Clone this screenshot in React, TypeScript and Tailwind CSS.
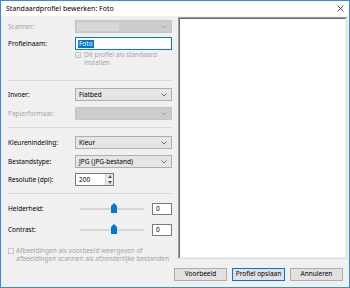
import { useState } from "react";

function Chevron({ color = "#606060" }: { color?: string }) {
  return (
    <svg width="6" height="4" viewBox="0 0 6 4" className="shrink-0">
      <path d="M0.5 0.5 L3 3 L5.5 0.5" fill="none" stroke={color} strokeWidth="0.9" />
    </svg>
  );
}

function Select({ value, disabled }: { value?: string; disabled?: boolean }) {
  return (
    <div
      className={
        disabled
          ? "ml-auto flex h-[13px] w-[97px] items-center justify-between border border-[#c4c4c4] bg-[#cccccc] pl-[1px] pr-[4px]"
          : "ml-auto flex h-[13px] w-[97px] items-center justify-between border border-[#adadad] bg-[#e5e5e5] pl-[3px] pr-[4px]"
      }
    >
      {value ? <span>{value}</span> : <span className="h-[8px] w-[42px] bg-[#d8d8d8]" />}
      <Chevron color={disabled ? "#9a9a9a" : "#606060"} />
    </div>
  );
}

function Row({ label, disabled, className = "", children }: { label: string; disabled?: boolean; className?: string; children: React.ReactNode }) {
  return (
    <div className={`flex h-[13px] items-center ${className}`}>
      <span className={disabled ? "text-[#a6a6a6]" : "text-black"}>{label}</span>
      {children}
    </div>
  );
}

function Slider({ value }: { value: string }) {
  return (
    <div className="ml-auto flex items-center">
      <div className="relative mr-[8px] h-[2px] w-[64px] border border-[#d6d6d6] bg-[#e7e7e7]">
        <svg width="6" height="10" viewBox="0 0 6 10" className="absolute left-[30px] top-[-6px]">
          <path d="M0 3 L3 0 L6 3 L6 10 L0 10 Z" fill="#0078d7" />
        </svg>
      </div>
      <div className="flex h-[12px] w-[20px] items-center border border-[#7a7a7a] bg-white pl-[3px]">{value}</div>
    </div>
  );
}

export default function App() {
  const [name] = useState("Foto");

  return (
    <div className="flex h-[288px] w-[350px] flex-col border border-[#3b8ad9] bg-[#f0f0f0] text-[6.5px] leading-[8px] text-black [font-family:'Noto_Sans',sans-serif]">
      {/* Titelbalk */}
      <div className="flex h-[15px] shrink-0 items-center justify-between bg-white pl-[5px] pr-[5px]">
        <span className="text-[7px]">Standaardprofiel bewerken: Foto</span>
        <svg width="7" height="7" viewBox="0 0 7 7">
          <path d="M0.5 0.5 L6.5 6.5 M6.5 0.5 L0.5 6.5" stroke="#3a3a3a" strokeWidth="0.9" />
        </svg>
      </div>

      <div className="flex flex-1 flex-col">
        <div className="flex">
          {/* Formulier */}
          <div className="flex w-[177px] flex-col pl-[7px] pr-[6px]">
            <Row label="Scanner:" disabled className="mt-[4px]">
              <Select disabled />
            </Row>
            <Row label="Profielnaam:" className="mt-[4px]">
              <div className="ml-auto flex h-[13px] w-[97px] items-center border border-[#0078d7] bg-white pl-[2px]">
                <span className="bg-[#0078d7] px-[1px] text-white">{name}</span>
              </div>
            </Row>
            <div className="ml-[67px] mt-[1px] flex h-[16px] items-start text-[#a6a6a6]">
              <div className="mr-[3px] mt-[1px] flex h-[6px] w-[6px] items-center justify-center border border-[#c6c6c6] bg-[#f0f0f0]">
                <svg width="5" height="5" viewBox="0 0 5 5">
                  <path d="M0.6 2.6 L2 4 L4.5 0.8" fill="none" stroke="#a6a6a6" strokeWidth="0.8" />
                </svg>
              </div>
              <div>
                Dit profiel als standaard
                <br />
                instellen
              </div>
            </div>
            <div className="mt-[13px] h-px bg-[#d9d9d9]" />
            <Row label="Invoer:" className="mt-[7px]">
              <Select value="Flatbed" />
            </Row>
            <Row label="Papierformaat:" disabled className="mt-[6px]">
              <Select disabled value=" " />
            </Row>
            <div className="mt-[7px] h-px bg-[#d9d9d9]" />
            <Row label="Kleurenindeling:" className="mt-[8px]">
              <Select value="Kleur" />
            </Row>
            <Row label="Bestandstype:" className="mt-[6px]">
              <Select value="JPG (JPG-bestand)" />
            </Row>
            <Row label="Resolutie (dpi):" className="mt-[5px]">
              <div className="ml-auto mr-[58px] flex h-[13px] w-[39px] items-center border border-[#7a7a7a] bg-white">
                <span className="flex-1 pl-[3px]">200</span>
                <div className="flex h-full w-[8px] flex-col justify-center gap-px border-l border-[#d0d0d0]">
                  <div className="flex h-[5px] items-center justify-center bg-[#e6e6e6]">
                    <svg width="4" height="3" viewBox="0 0 4 3"><path d="M0 3 L2 0 L4 3 Z" fill="#606060" /></svg>
                  </div>
                  <div className="flex h-[5px] items-center justify-center bg-[#e6e6e6]">
                    <svg width="4" height="3" viewBox="0 0 4 3"><path d="M0 0 L2 3 L4 0 Z" fill="#606060" /></svg>
                  </div>
                </div>
              </div>
            </Row>
            <div className="mt-[7px] h-px bg-[#d9d9d9]" />
            <Row label="Helderheid:" className="mt-[8px]">
              <Slider value="0" />
            </Row>
            <Row label="Contrast:" className="mt-[8px]">
              <Slider value="0" />
            </Row>
            <div className="mt-[11px] flex items-start whitespace-nowrap text-[#a6a6a6]">
              <div className="mr-[2px] mt-[1px] h-[6px] w-[6px] shrink-0 border border-[#c6c6c6] bg-[#f5f5f5]" />
              <div>
                Afbeeldingen als voorbeeld weergeven of
                <br />
                afbeeldingen scannen als afzonderlijke bestanden
              </div>
            </div>
          </div>

          {/* Voorbeeldvenster */}
          <div className="mt-[1px] h-[242px] w-[169px] border border-b-[#dcdcdc] border-l-[#a0a0a0] border-r-[#dcdcdc] border-t-[#a0a0a0]">
            <div className="h-full w-full border border-b-[#f0f0f0] border-l-[#696969] border-r-[#f0f0f0] border-t-[#696969] bg-white" />
          </div>
        </div>

        {/* Knoppen */}
        <div className="mt-auto mb-[6px] flex justify-end gap-[5px] pr-[6px]">
          <button className="h-[13px] w-[53px] border border-[#adadad] bg-[#e1e1e1] text-[6.5px] leading-none">Voorbeeld</button>
          <button className="h-[13px] w-[53px] border border-[#0078d7] bg-[#e1e1e1] text-[6.5px] leading-none">Profiel opslaan</button>
          <button className="h-[13px] w-[53px] border border-[#adadad] bg-[#e1e1e1] text-[6.5px] leading-none">Annuleren</button>
        </div>
      </div>
    </div>
  );
}
